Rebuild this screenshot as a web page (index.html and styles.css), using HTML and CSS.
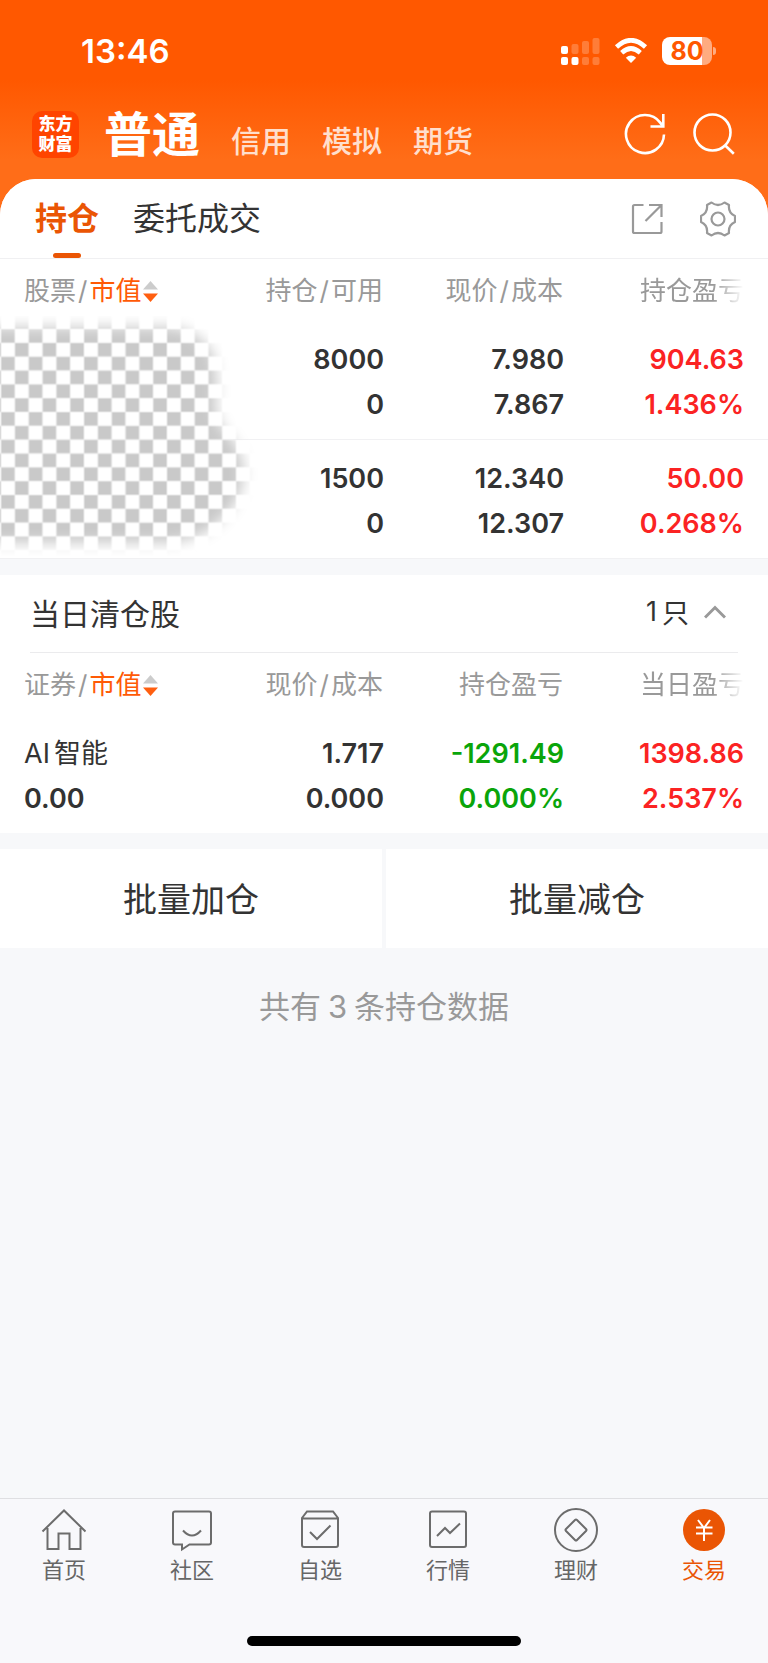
FILE: index.html
```html
<!DOCTYPE html>
<html lang="zh-CN">
<head>
<meta charset="utf-8">
<meta name="viewport" content="width=device-width, initial-scale=1">
<title>持仓</title>
<link rel="stylesheet" href="styles.css">
</head>
<body>
<header class="top">
  <div class="status">
    <time class="clock">13:46</time>
    <div class="status-icons">
      <svg class="signal" width="39" height="28" viewBox="0 0 39 28" fill="#fff" aria-hidden="true">
        <rect x="0" y="9" width="7" height="8" rx="2"/>
        <rect x="0" y="20" width="7" height="8" rx="2"/>
        <rect x="10.500" y="20" width="7" height="8" rx="2"/>
        <g opacity=".22"><rect x="10.500" y="7" width="7" height="10" rx="2"/><rect x="21" y="4" width="7" height="13" rx="2"/><rect x="31.500" y="1" width="7" height="16" rx="2"/><rect x="21" y="20" width="7" height="8" rx="2"/><rect x="31.500" y="20" width="7" height="8" rx="2"/></g>
      </svg>
      <svg class="wifi" width="34" height="26" viewBox="0 0 34 26" aria-hidden="true">
        <path d="M2.500 9Q17-4.500 31.500 9" fill="none" stroke="#fff" stroke-width="4.600"/>
        <path d="M7.700 14.700Q17 6.300 26.300 14.700" fill="none" stroke="#fff" stroke-width="4.600"/>
        <path d="M17 25l-5.200-5.300q5.200-4.200 10.400 0z" fill="#fff"/>
      </svg>
      <div class="battery"><span class="battery-level">80</span></div>
    </div>
  </div>
  <div class="masthead">
    <div class="logo"><span>东方</span><span>财富</span></div>
    <nav class="accounts">
      <a class="account account-on" href="#">普通</a>
      <a class="account" href="#">信用</a>
      <a class="account" href="#">模拟</a>
      <a class="account" href="#">期货</a>
    </nav>
    <div class="actions">
      <button class="icon-btn" aria-label="刷新">
        <svg width="42" height="42" viewBox="0 0 42 42" fill="none" stroke="#fff" stroke-width="2.600"><path d="M40 21.500A19 19 0 1 1 36.200 9.600L39 13.500"/><path d="M39.300 1v12.500H26.500"/></svg>
      </button>
      <button class="icon-btn" aria-label="搜索">
        <svg width="42" height="42" viewBox="0 0 42 42" fill="none" stroke="#fff" stroke-width="2.600"><circle cx="19.500" cy="19.500" r="18"/><path d="M32 32.300l8.800 8.500"/></svg>
      </button>
    </div>
  </div>
</header>

<main class="panel">
  <div class="tabs">
    <nav class="tab-list">
      <a class="tab tab-on" href="#">持仓</a>
      <a class="tab" href="#">委托成交</a>
    </nav>
    <div class="tools">
      <button class="icon-btn" aria-label="分享">
        <svg width="36" height="36" viewBox="0 0 36 36" fill="none" stroke="#999" stroke-width="2.200"><path d="M14.500 4H5.500Q4 4 4 5.500v25Q4 32 5.500 32h25.500Q32.500 32 32.500 30.500V21"/><path d="M20 4h12.500v12M32 4.500L16.500 20"/></svg>
      </button>
      <button class="icon-btn" aria-label="设置">
        <svg width="36" height="36" viewBox="0 0 36 36" fill="none" stroke="#999" stroke-width="2.200" stroke-linejoin="round"><circle cx="18" cy="18" r="6.500"/><path d="M11.500 1.500Q18 6.500 24.500 1.500L29 4Q28 12 35 15v6Q28 24 29 32l-4.500 2.500Q18 29.500 11.500 34.500L7 32Q8 24 1 21v-6Q8 12 7 4z"/></svg>
      </button>
    </div>
  </div>

  <section class="holdings">
    <table class="grid">
      <thead>
        <tr>
          <th>股票<i class="slash">/</i><b class="sorted">市值</b><svg class="sort" width="15" height="21" viewBox="0 0 15 21" aria-hidden="true"><path d="M0 8.500L7.500 0 15 8.500z" fill="#ccc"/><path d="M0 12.500L7.500 21 15 12.500z" fill="#ff5f10"/></svg></th>
          <th>持仓<i class="slash">/</i>可用</th>
          <th>现价<i class="slash">/</i>成本</th>
          <th><span class="fade">持仓盈亏</span></th>
        </tr>
      </thead>
      <tbody>
        <tr><td></td><td>8000<br>0</td><td>7.980<br>7.867</td><td class="up">904.63<br>1.436%</td></tr>
        <tr><td></td><td>1500<br>0</td><td>12.340<br>12.307</td><td class="up">50.00<br>0.268%</td></tr>
      </tbody>
    </table>
    <svg class="mosaic" width="270" height="240" viewBox="0 0 270 240" aria-hidden="true">
      <defs>
        <pattern id="checks" x="1" y="13" width="27.660" height="27.660" patternUnits="userSpaceOnUse">
          <rect width="27.660" height="27.660" fill="#fff"/>
          <rect width="13.830" height="13.830" fill="#c9c9c9"/>
          <rect x="13.830" y="13.830" width="13.830" height="13.830" fill="#c9c9c9"/>
          <path d="M0 0H27.660M0 13.830H27.660M0 27.660H27.660M0 0V27.660M13.830 0V27.660M27.660 0V27.660" stroke="#ebebeb"/>
        </pattern>
        <filter id="soft" x="-20%" y="-20%" width="140%" height="140%"><feGaussianBlur stdDeviation="7"/></filter>
        <mask id="brush" maskUnits="userSpaceOnUse" x="0" y="0" width="270" height="240">
          <path d="M-40 11H170Q198 14 212 36Q219 62 216 84Q214 104 228 118Q244 136 244 160Q240 188 218 207Q198 225 165 227H-40z" fill="#fff" filter="url(#soft)"/>
        </mask>
      </defs>
      <rect width="270" height="240" fill="url(#checks)" mask="url(#brush)"/>
    </svg>
  </section>

  <section class="cleared">
    <div class="cleared-head">
      <h2 class="cleared-title">当日清仓股</h2>
      <button class="toggle">1<span>只</span><svg width="22" height="14" viewBox="0 0 22 14" fill="none" stroke="#999" stroke-width="3" aria-hidden="true"><path d="M1 12.500L11 2.500l10 10"/></svg></button>
    </div>
    <table class="grid">
      <thead>
        <tr>
          <th>证券<i class="slash">/</i><b class="sorted">市值</b><svg class="sort" width="15" height="21" viewBox="0 0 15 21" aria-hidden="true"><path d="M0 8.500L7.500 0 15 8.500z" fill="#ccc"/><path d="M0 12.500L7.500 21 15 12.500z" fill="#ff5f10"/></svg></th>
          <th>现价<i class="slash">/</i>成本</th>
          <th>持仓盈亏</th>
          <th><span class="fade">当日盈亏</span></th>
        </tr>
      </thead>
      <tbody>
        <tr><td><span class="name">AI<span class="name-cjk">智能</span></span><br>0.00</td><td>1.717<br>0.000</td><td class="down">-1291.49<br>0.000%</td><td class="up">1398.86<br>2.537%</td></tr>
      </tbody>
    </table>
  </section>

  <div class="batch">
    <button class="batch-btn">批量加仓</button>
    <button class="batch-btn">批量减仓</button>
  </div>
  <p class="summary">共有<span class="count">3</span>条持仓数据</p>
</main>

<footer class="bottom">
  <nav class="dock">
    <a class="dock-item" href="#">
      <svg width="46" height="44" viewBox="0 0 46 44"><path d="M1.500 23.500L23 2.500l21.500 21M6.500 20v21h11V25.500h11V41h11V20"/></svg>首页</a>
    <a class="dock-item" href="#">
      <svg width="46" height="44" viewBox="0 0 46 44"><path d="M6 3.500h34q2 0 2 2v29q0 2-2 2H20.500L13 41.500v-5H6q-2 0-2-2v-29q0-2 2-2z"/><path d="M14 22.500q9 10 18 0"/></svg>社区</a>
    <a class="dock-item" href="#">
      <svg width="46" height="44" viewBox="0 0 46 44"><path d="M10 3.500h26l5 6.500v27q0 2-2 2H7q-2 0-2-2V10zM5 10.500h36M13 24l7 7 13.500-13.500"/></svg>自选</a>
    <a class="dock-item" href="#">
      <svg width="46" height="44" viewBox="0 0 46 44"><rect x="5" y="3.500" width="36" height="35.500" rx="2"/><path d="M12 28l8-8 5 5 10-9.500"/></svg>行情</a>
    <a class="dock-item" href="#">
      <svg width="46" height="44" viewBox="0 0 46 44"><circle cx="23" cy="22" r="21"/><path d="M22 12q1-1 2 0l9 9q1 1 0 2l-9 9q-1 1-2 0l-9-9q-1-1 0-2z"/></svg>理财</a>
    <a class="dock-item dock-on" href="#">
      <svg width="46" height="44" viewBox="0 0 46 44"><circle class="disc" cx="23" cy="22" r="21"/><path class="yen" d="M17 12l6 8 6-8M23 19.500V33M15 19.500h16.500M15 25.500h16.500"/></svg>交易</a>
  </nav>
  <div class="home-bar"></div>
</footer>
</body>
</html>
```
FILE: styles.css
```css
* { box-sizing: border-box; }

body {
  margin: 0;
  min-height: 100vh;
  display: flex;
  flex-direction: column;
  background: #f7f8fa;
  color: #333;
  font-family: Inter, "Noto Sans CJK SC", sans-serif;
}

a { color: inherit; text-decoration: none; }

button {
  margin: 0;
  padding: 0;
  border: 0;
  background: none;
  color: inherit;
  font: inherit;
}

svg { display: block; }

/* header */
.top {
  padding-bottom: 56px;
  background: linear-gradient(#ff5800 0, #ff5800 80px, #ff6d18 160px);
  color: #fff;
}

.status {
  display: flex;
  justify-content: space-between;
  align-items: center;
  height: 90px;
  padding: 12px 56px 0 81px;
}

.clock { font-size: 33px; font-weight: 600; }

.status-icons { display: flex; align-items: center; gap: 14px; }

.battery {
  position: relative;
  width: 50px;
  height: 28px;
  border-radius: 8px;
  background: linear-gradient(to right, #fff 80%, #ffab80 80%);
}

.battery::after {
  content: "";
  position: absolute;
  left: 51px;
  top: 10px;
  width: 3px;
  height: 8px;
  border-radius: 0 3px 3px 0;
  background: #ffab80;
}

.battery-level {
  display: block;
  color: #ff5800;
  font-size: 25px;
  font-weight: 700;
  line-height: 28px;
  text-align: center;
}

.masthead {
  display: flex;
  align-items: center;
  height: 88px;
  padding: 0 33px 0 32px;
}

.logo {
  display: flex;
  flex-direction: column;
  justify-content: center;
  width: 47px;
  height: 47px;
  border-radius: 10px;
  background: #ff4400;
  font-size: 17px;
  font-weight: 900;
  line-height: 20px;
  text-align: center;
}

.accounts {
  display: flex;
  align-items: baseline;
  gap: 31px;
  margin-left: 25px;
  padding-top: 2px;
}

.account { color: #ffdfcd; font-size: 30px; font-weight: 500; }
.account-on { color: #fff; font-size: 48px; font-weight: 700; line-height: 72px; }

.actions { display: flex; gap: 27px; margin-left: auto; }

/* white panel */
.panel {
  flex: 1;
  margin-top: -55px;
  border-radius: 36px 36px 0 0;
  background: #f7f8fa;
}

.tabs {
  display: flex;
  justify-content: space-between;
  height: 80px;
  padding: 0 32px 0 35px;
  border-bottom: 1px solid #f0f0f2;
  border-radius: 36px 36px 0 0;
  background: #fff;
}

.tab-list { display: flex; gap: 34px; }

.tab { position: relative; padding-top: 1px; font-size: 32px; line-height: 78px; }
.tab-on { color: #ea5504; font-weight: 700; }

.tab-on::after {
  content: "";
  position: absolute;
  left: 50%;
  bottom: 0;
  width: 28px;
  height: 5px;
  margin-left: -14px;
  border-radius: 3px;
  background: #ea5504;
}

.tools { display: flex; align-items: center; gap: 35px; }

/* tables */
.holdings {
  position: relative;
  border-bottom: 1px solid #f1f1f3;
  background: #fff;
}

.grid {
  width: 100%;
  table-layout: fixed;
  border-collapse: separate;
  border-spacing: 0;
}

.grid th {
  width: 180px;
  height: 62px;
  padding: 0 1px 4px 0;
  color: #999;
  font-size: 26px;
  font-weight: 400;
  text-align: right;
  white-space: nowrap;
}

.grid td {
  padding: 16px 0 12px;
  font-size: 27px;
  font-weight: 600;
  line-height: 45px;
  text-align: right;
}

.grid th:first-child,
.grid td:first-child { width: auto; padding-left: 24px; text-align: left; }

.grid th:last-child { width: 204px; padding-right: 24px; }
.grid td:last-child { padding-right: 24px; }

.grid tr + tr td { border-top: 1px solid #f1f1f3; }

.slash { padding: 0 2px; font-style: normal; }
.sorted { color: #ff5a05; font-weight: 400; }
.sort { display: inline-block; margin-left: 2px; vertical-align: -2px; }

.fade {
  -webkit-mask-image: linear-gradient(to right, #000 70%, transparent);
  mask-image: linear-gradient(to right, #000 70%, transparent);
}

.grid .up { color: #fb2323; }
.grid .down { color: #0aa50a; }

.name { font-weight: 400; }
.name-cjk { margin-left: 4px; }

.mosaic { position: absolute; left: 0; top: 57px; }

.cleared { margin-top: 16px; background: #fff; }

.cleared-head {
  display: flex;
  justify-content: space-between;
  align-items: center;
  height: 78px;
  margin: 0 30px;
  padding-bottom: 4px;
  border-bottom: 1px solid #ebebed;
}

.cleared-title { margin: 0; font-size: 30px; font-weight: 400; }

.toggle {
  display: flex;
  align-items: center;
  gap: 5px;
  padding-right: 12px;
  font-size: 27px;
}

.toggle svg { margin-left: 10px; }

.batch {
  display: grid;
  grid-template-columns: 1fr 1fr;
  gap: 4px;
  margin-top: 16px;
}

.batch-btn { height: 99px; padding-bottom: 2px; background: #fff; font-size: 34px; }

.summary {
  margin: 0;
  padding: 35px 0;
  color: #999;
  font-size: 31px;
  line-height: 48px;
  text-align: center;
}

.count { margin: 0 7px; }

/* bottom navigation */
.bottom {
  padding-bottom: 17px;
  border-top: 1px solid #dfdfe2;
  background: #f8f8fb;
}

.dock { display: grid; grid-template-columns: repeat(6, 1fr); }

.dock-item {
  display: flex;
  flex-direction: column;
  align-items: center;
  gap: 2px;
  padding-top: 9px;
  color: #666;
  font-size: 22px;
  line-height: 32px;
}

.dock-item svg { fill: none; stroke: #6c6c6c; stroke-width: 2; }

.dock-on { color: #ea5504; }
.dock-item .disc { fill: #ea5504; stroke: none; }
.dock-item .yen { stroke: #fff; }

.home-bar {
  width: 274px;
  height: 10px;
  margin: 50px auto 0;
  border-radius: 5px;
  background: #000;
}
```
